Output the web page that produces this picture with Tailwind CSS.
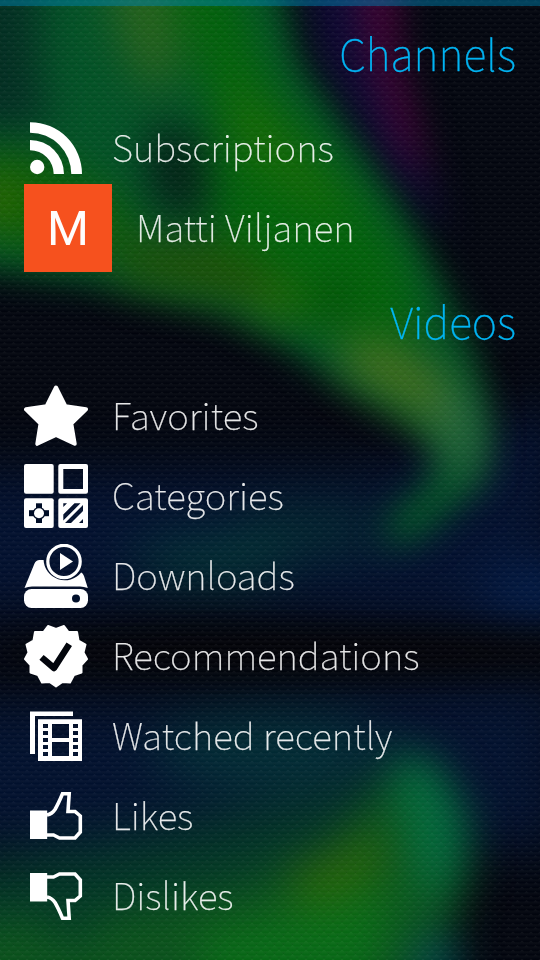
<!DOCTYPE html>
<html lang="en">
<head>
<meta charset="utf-8">
<title>Channels and videos</title>
<script src="https://cdn.jsdelivr.net/npm/@tailwindcss/browser@4"></script>
</head>
<body class="relative w-[540px] h-[960px] overflow-hidden bg-[#02050f] font-['Noto_Sans_CJK_SC','Noto_Sans',sans-serif] font-thin text-white">
<svg class="absolute inset-0 w-[540px] h-[960px]" viewBox="0 0 540 960" aria-hidden="true">
  <defs>
    <filter id="b16" x="-60%" y="-60%" width="220%" height="220%" color-interpolation-filters="sRGB"><feGaussianBlur stdDeviation="17"/></filter>
    <filter id="b20" x="-60%" y="-60%" width="220%" height="220%" color-interpolation-filters="sRGB"><feGaussianBlur stdDeviation="21"/></filter>
    <filter id="b26" x="-100%" y="-100%" width="300%" height="300%" color-interpolation-filters="sRGB"><feGaussianBlur stdDeviation="26"/></filter>
    <linearGradient id="cell" x1="0" y1="0" x2="0" y2="1"><stop offset="0" stop-color="#fff" stop-opacity=".07"/><stop offset=".6" stop-color="#fff" stop-opacity="0"/><stop offset="1" stop-color="#000" stop-opacity=".14"/></linearGradient>
    <pattern id="weave" width="9" height="9" patternUnits="userSpaceOnUse">
      <path d="M4.500 0L9 4.500L4.500 9L0 4.500Z" fill="url(#cell)"/>
      <path d="M0 4.500L4.500 9L0 13.500L-4.500 9Z" fill="url(#cell)"/>
      <path d="M9 4.500L13.500 9L9 13.500L4.500 9Z" fill="url(#cell)"/>
      <path d="M0 -4.500L4.500 0L0 4.500L-4.500 0Z" fill="url(#cell)"/>
      <path d="M9 -4.500L13.500 0L9 4.500L4.500 0Z" fill="url(#cell)"/>
    </pattern>
  </defs>
  <rect width="540" height="960" fill="#01040d"/>
  <g filter="url(#b26)">
    <path d="M-60 470H380L560 400V630L400 620L200 600L-60 620Z" fill="#000e2c"/>
    <ellipse cx="545" cy="594" rx="66" ry="22" fill="#001e50"/>
    <ellipse cx="210" cy="560" rx="80" ry="22" fill="#003434"/>
    <ellipse cx="310" cy="530" rx="80" ry="22" fill="#00282c"/>
    <path d="M-60 700H200L560 680V850H-60Z" fill="#000f2c"/>
    <ellipse cx="270" cy="750" rx="120" ry="38" fill="#002c34"/>
    <path d="M-60 870L100 845L300 800L420 780V1020H-60Z" fill="#003424"/>
  </g>
  <g filter="url(#b16)">
    <path d="M300 -40H395L400 60L425 150L445 240L380 160L320 60Z" fill="#0a0630"/>
    <path d="M350 -40H400V50L420 130L428 190L395 140L368 60Z" fill="#3a0030"/>
    <path d="M-50 -50H272L298 60L345 130L400 210L445 290L476 360L488 430L480 485L420 538L385 548L390 515L430 480L440 450L410 425L340 385L280 342L220 312L100 285L-50 265Z" fill="#005024"/>
  </g>
  <g filter="url(#b20)">
    <path d="M-50 -70H40V70L50 130L-10 130H-50Z" fill="#002c20"/>
    <path d="M160 -40H225L275 90L350 180L405 260L425 340L300 330L215 260L215 120Z" fill="#006008"/>
    <path d="M105 -40H165L180 60L155 100L120 40Z" fill="#24601a"/>
    <path d="M225 70L265 115L340 200L330 215L240 150Z" fill="#166804"/>
    <path d="M155 120L200 135L210 200L190 225L155 205L145 160Z" fill="#001e14"/>
    <path d="M-30 150L40 160L110 195L140 240L60 250L-30 235Z" fill="#0c5c00"/>
    <ellipse cx="-5" cy="200" rx="26" ry="24" fill="#2a6400"/>
    <path d="M110 240L220 240L280 275L305 325L250 305L120 280Z" fill="#1a4e04"/>
    <ellipse cx="277" cy="303" rx="22" ry="20" fill="#206404"/>
    <ellipse cx="335" cy="300" rx="20" ry="22" fill="#004c04"/>
    <path d="M335 340L390 340L450 380L480 450L455 455L420 415L350 375Z" fill="#406c1a"/>
    <path d="M430 390L468 390L482 460L460 485Z" fill="#2a6840"/>
  </g>
  <g filter="url(#b20)">
    <path d="M-40 920L100 915L240 885L330 850L395 770L430 765L465 810L470 870L450 930L420 1000H-40Z" fill="#08501a"/>
    <path d="M390 750L435 760L468 820L462 870L430 910L405 830Z" fill="#00683a"/>
    <path d="M290 870L375 830L390 860L350 900L300 915Z" fill="#226008"/>
    <path d="M200 935L400 885L370 990H200Z" fill="#066814"/>
    <ellipse cx="435" cy="965" rx="24" ry="35" fill="#004444"/>
    <ellipse cx="72" cy="930" rx="22" ry="18" fill="#003c20"/>
  </g>
  <ellipse cx="330" cy="652" rx="330" ry="19" fill="#010205" filter="url(#b16)"/>
  <rect width="540" height="960" fill="url(#weave)"/>
  <rect width="540" height="6" fill="#0088b8" fill-opacity=".46"/>
</svg>

<main class="relative flex flex-col">
  <h1 class="h-[112px] px-6 pt-[21px] text-right text-[43px] leading-[62px] text-[#00b8f8] [-webkit-text-stroke:0.35px_#00b8f8] opacity-98">Channels</h1>
  <ul class="flex flex-col text-[36.800px] leading-[72px]">
    <li class="flex h-[72px] items-center gap-6 pl-6">
      <svg class="size-16 shrink-0" viewBox="0 0 64 64" fill="#fff"><g transform="translate(0 -4)"><circle cx="13.200" cy="55" r="7.200"/><path d="M6 28A34 34 0 0 1 40 62H29.700A23.700 23.700 0 0 0 6 38.300Z"/><path d="M6 10.200A51.800 51.800 0 0 1 58 62H47.300A41.300 41.300 0 0 0 6 20.700Z"/></g></svg>
      <span class="-mt-1 opacity-90 [-webkit-text-stroke:0.25px_#fff]">Subscriptions</span>
    </li>
    <li class="flex h-[88px] items-center gap-6 pl-6">
      <div class="flex size-[88px] shrink-0 items-center justify-center bg-[#f6511e] font-['Roboto'] text-[48px] font-normal leading-[88px]"><span class="mt-[2px] opacity-99">M</span></div>
      <span class="-mt-1 tracking-[0.08px] opacity-90 [-webkit-text-stroke:0.25px_#fff]">Matti Viljanen</span>
    </li>
  </ul>
  <h1 class="h-[104px] px-6 pt-[17px] text-right text-[43px] leading-[62px] text-[#00b8f8] [-webkit-text-stroke:0.35px_#00b8f8] opacity-98">Videos</h1>
  <ul class="flex flex-col text-[36.800px] leading-[80px]">
    <li class="flex h-20 items-center gap-6 pl-6">
      <svg class="size-16 shrink-0" viewBox="0 0 64 64" fill="#fff" stroke="#fff" stroke-width="4" stroke-linejoin="round"><path d="M32 3.500L41.500 22.300L62 25.300L47.300 39.500L50.700 59.800L32 51L13.300 59.800L16.500 39.500L2 25.300L22.500 22.300Z"/></svg>
      <span class="-mt-1 tracking-[0.15px] opacity-90 [-webkit-text-stroke:0.25px_#fff]">Favorites</span>
    </li>
    <li class="flex h-20 items-center gap-6 pl-6">
      <svg class="size-16 shrink-0" viewBox="0 0 64 64" fill="#fff"><rect width="29.700" height="29.700" rx="2"/><path fill-rule="evenodd" d="M36.300 0H62Q64 0 64 2V27.700Q64 29.700 62 29.700H36.300Q34.300 29.700 34.300 27.700V2Q34.300 0 36.300 0ZM39.300 5V25H59V5Z"/><rect y="34.300" width="29.700" height="29.700" rx="2"/><g fill="#000d26"><rect x="12" y="39.300" width="6" height="19.700"/><rect x="5" y="46.200" width="20" height="6"/><circle cx="15" cy="49.200" r="6.300"/></g><circle cx="15" cy="49.200" r="5"/><path fill-rule="evenodd" d="M36.300 34.300H62Q64 34.300 64 36.300V62Q64 64 62 64H36.300Q34.300 64 34.300 62V36.300Q34.300 34.300 36.300 34.300ZM39.300 39.300V43L43 39.300ZM50.500 39.300L39.300 50.500V56.500L56.500 39.300ZM59 41L41 59H47L59 47ZM59 55L55 59H59Z"/></svg>
      <span class="-mt-1 tracking-[0.12px] opacity-90 [-webkit-text-stroke:0.25px_#fff]">Categories</span>
    </li>
    <li class="flex h-20 items-center gap-6 pl-6">
      <svg class="size-16 shrink-0" viewBox="0 0 64 64" fill="#fff"><rect y="45" width="64" height="19" rx="7.500"/><circle cx="52" cy="54.500" r="4" fill="#000f2a"/><path d="M0.500 44L10.500 19.500Q12 16 15.500 16H19.600A21.200 21.200 0 0 0 57.200 28.500Q59 29 60 32L63.800 44Q60 42.500 56 42.500H8Q4 42.500 0.500 44Z"/><circle cx="40" cy="17.500" r="16.200" fill="none" stroke="#fff" stroke-width="3.200"/><path d="M36 9L49 17.500L36 26Z"/></svg>
      <span class="-mt-1 opacity-90 [-webkit-text-stroke:0.25px_#fff]">Downloads</span>
    </li>
    <li class="flex h-20 items-center gap-6 pl-6">
      <svg class="size-16 shrink-0" viewBox="0 0 64 64" fill="#fff"><path stroke="#fff" stroke-width="2" stroke-linejoin="round" d="M24 2L32 5L40 2L44.500 8L53 8L54.500 16.500L61.500 20.500L59.500 28.500L63 35L57.500 41L57.500 48.500L50 51L46 58.500L38.500 58L32 62.500L25.500 58L18 58.500L14 51L6.500 48.500L6.500 41L1 35L4.500 28.500L2.500 20.500L9.500 16.500L11 8L19.500 8Z"/><path d="M20 35.500L30 44L43.500 23" fill="none" stroke="#02050c" stroke-width="6.500" stroke-linejoin="round" stroke-linecap="square"/></svg>
      <span class="-mt-1 opacity-90 [-webkit-text-stroke:0.25px_#fff]">Recommendations</span>
    </li>
    <li class="flex h-20 items-center gap-6 pl-6">
      <svg class="size-16 shrink-0" viewBox="0 0 64 64" fill="#fff"><path d="M6 7.500H49V12H11V50H6Z"/><path fill-rule="evenodd" d="M14 15.300H58V57H14ZM28 20V34H45V20ZM28 38V52H45V38ZM19 20V24H24V20ZM19 27V31H24V27ZM19 34V38H24V34ZM19 41V45H24V41ZM19 48V52H24V48ZM49 20V24H54V20ZM49 27V31H54V27ZM49 34V38H54V34ZM49 41V45H54V41ZM49 48V52H54V48Z"/></svg>
      <span class="-mt-1 tracking-[0.12px] opacity-90 [-webkit-text-stroke:0.25px_#fff]">Watched recently</span>
    </li>
    <li class="flex h-20 items-center gap-6 pl-6">
      <svg class="size-16 shrink-0" viewBox="0 0 64 64"><path fill="#fff" d="M6 26.500H23.200V55H6Z"/><path fill="none" stroke="#fff" stroke-width="3.600" d="M23 31Q28 30 31 25.500Q34 20.500 38.500 9.800H45.200L44 27.500H51L56.300 32V48L51 54H35.500L29.500 51H23"/></svg>
      <span class="-mt-1 opacity-90 [-webkit-text-stroke:0.25px_#fff]">Likes</span>
    </li>
    <li class="flex h-20 items-center gap-6 pl-6">
      <svg class="size-16 shrink-0 -scale-y-100" viewBox="0 0 64 64"><path fill="#fff" d="M6 26.500H23.200V55H6Z"/><path fill="none" stroke="#fff" stroke-width="3.600" d="M23 31Q28 30 31 25.500Q34 20.500 38.500 9.800H45.200L44 27.500H51L56.300 32V48L51 54H35.500L29.500 51H23"/></svg>
      <span class="-mt-1 opacity-90 [-webkit-text-stroke:0.25px_#fff]">Dislikes</span>
    </li>
  </ul>
</main>
</body>
</html>
